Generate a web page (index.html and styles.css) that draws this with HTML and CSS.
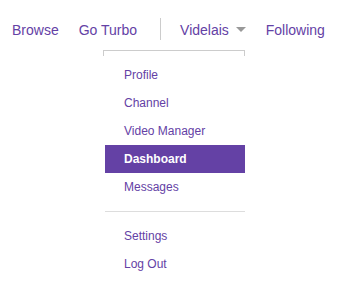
FILE: index.html
```html
<!DOCTYPE html>
<html lang="en">
<head>
    <meta charset="UTF-8">
    <meta name="viewport" content="width=device-width, initial-scale=1.0">
    <title>Menu</title>
    <link rel="stylesheet" href="styles.css">
</head>
<body>
    <nav class="top-nav">
        <a class="nav-link" href="#">Browse</a>
        <a class="nav-link" href="#">Go Turbo</a>
        <span class="nav-divider"></span>
        <a class="nav-link user-link" href="#">Videlais <span class="caret"></span></a>
        <a class="nav-link" href="#">Following</a>
    </nav>

    <div class="menu">
        <div class="menu-cap"></div>
        <ul class="menu-list">
            <li><a href="#">Profile</a></li>
            <li><a href="#">Channel</a></li>
            <li><a href="#">Video Manager</a></li>
            <li class="active"><a href="#">Dashboard</a></li>
            <li><a href="#">Messages</a></li>
        </ul>
        <div class="menu-sep"></div>
        <ul class="menu-list">
            <li><a href="#">Settings</a></li>
            <li><a href="#">Log Out</a></li>
        </ul>
    </div>
</body>
</html>
```

FILE: styles.css
```css
body {
    margin: 0;
    font-family: "Liberation Sans", Arial, sans-serif;
    background-color: #fff;
}
.top-nav {
    display: flex;
    align-items: flex-start;
    gap: 20px;
    padding: 18px 0 0 12px;
}
.nav-link {
    display: block;
    padding: 2px 0;
    font-size: 14px;
    line-height: 20px;
    color: #6441a5;
    text-decoration: none;
}
.nav-divider {
    width: 1px;
    height: 22px;
    margin: 0 -1px 0 3px;
    background-color: #ccc;
}
.caret {
    display: inline-block;
    width: 0;
    height: 0;
    margin-left: 3px;
    border-left: 5px solid transparent;
    border-right: 5px solid transparent;
    border-top: 5px solid #999;
    vertical-align: 3px;
}
.menu {
    width: 142px;
    margin: 8px 0 0 103px;
}
.menu-cap {
    height: 5px;
    margin-bottom: 5px;
    border: 1px solid #ccc;
    border-bottom: none;
}
.menu-list {
    list-style: none;
    margin: 0 0 0 2px;
    padding: 0;
}
.menu-list a {
    display: block;
    padding-left: 19px;
    font-size: 12px;
    line-height: 28px;
    color: #6441a5;
    text-decoration: none;
}
.menu-list .active a {
    background-color: #6441a5;
    color: #fff;
    font-weight: bold;
}
.menu-sep {
    height: 1px;
    margin: 10px 0 10px 2px;
    background-color: #ddd;
}
```
